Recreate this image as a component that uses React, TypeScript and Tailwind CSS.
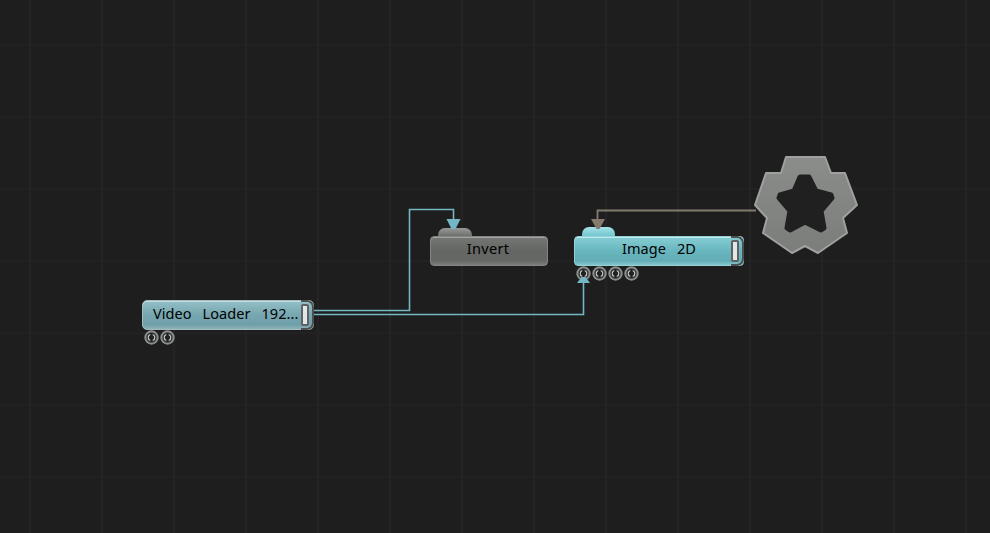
import React from 'react';

const font = { fontFamily: '"Noto Sans", sans-serif' };

// little round parameter dots below a node
function Dots({ count }: { count: number }) {
  return (
    <div className="flex gap-[1px] pl-[2px]">
      {Array.from({ length: count }).map((_, i) => (
        <svg key={i} width="15" height="15" viewBox="0 0 15 15">
          <circle cx="7.5" cy="7.5" r="6.2" fill="#3a3b3b" stroke="#8b8d8d" strokeWidth="2" />
          <circle cx="7.5" cy="7.5" r="4.2" fill="#202121" />
          <path d="M6.3 4.5A3.2 3.2 0 0 0 6.3 10.5M8.7 4.5A3.2 3.2 0 0 1 8.7 10.5" fill="none" stroke="#c9cbcb" strokeWidth="1.2" />
        </svg>
      ))}
    </div>
  );
}

function Output() {
  return (
    <div className="absolute right-[-1px] top-[-1px] bottom-[-1px] flex w-[13px] items-center rounded-r-[7px] border-[2px] border-l-0 border-[#4d5050]">
      <div className="h-[22px] w-[8px] rounded-[2px] border-[2px] border-[#5f6263] bg-[#e4e6e6]" />
    </div>
  );
}

export default function App() {
  return (
    <div className="relative h-[533px] w-[990px] overflow-hidden bg-[#1e1e1e] bg-[linear-gradient(90deg,#212121_2px,#262626_2px,#262626_3px,transparent_3px),linear-gradient(180deg,#222222_2px,transparent_2px)] bg-[size:72px_72px] bg-[position:28px_44px]" style={font}>
      {/* wires */}
      <svg className="absolute inset-0" width="990" height="533" viewBox="0 0 990 533" fill="none">
        <path d="M313 310.5H409.5V209.5H453.5V222" stroke="#74b6c4" strokeWidth="1.6" />
        <path d="M313 314.5H583.5V282" stroke="#74b6c4" strokeWidth="1.6" />
        <path d="M756 210.5H597.5V222" stroke="#857a6e" strokeWidth="1.8" />
      </svg>

      {/* Video Loader */}
      <div className="absolute left-[142px] top-[300px] w-[172px]">
        <div className="relative flex h-[30px] items-center rounded-[5px] border border-[#a3bcc1] bg-[linear-gradient(180deg,#94c0c7_0%,#76a6b0_50%,#6f9fa9_85%,#90b3b9_100%)] pb-[3px] pl-[10px] text-[14.5px] tracking-[0.05px] [word-spacing:1.7px] text-black shadow-[inset_0_1px_0_#c4dde1]">
          <span className="whitespace-pre">Video  Loader  192...</span>
          <Output />
        </div>
        <Dots count={2} />
      </div>

      {/* Invert */}
      <div className="absolute left-[430px] top-[228px] w-[118px]">
        <div className="ml-[8px] h-[8px] w-[34px] rounded-t-[7px] bg-[linear-gradient(180deg,#979a97,#6e706e)]" />
        <div className="flex h-[30px] items-center justify-center rounded-[4px] border border-[#828582] bg-[linear-gradient(180deg,#747774_0%,#646664_50%,#666866_85%,#7b7e7b_100%)] pb-[4px] pr-[2px] text-[14.5px] tracking-[0.3px] text-black shadow-[inset_0_1px_0_#a0a3a0]">
          Invert
        </div>
      </div>

      {/* Image 2D */}
      <div className="absolute left-[574px] top-[227px] w-[170px]">
        <div className="ml-[8px] h-[9px] w-[33px] rounded-t-[7px] bg-[linear-gradient(180deg,#a5e2e8,#73c6cf)]" />
        <div className="relative flex h-[30px] items-center justify-center rounded-[4px] border border-[#93d3d8] bg-[linear-gradient(180deg,#86cdd3_0%,#68b6bf_50%,#62acb5_85%,#86c6cc_100%)] pb-[4px] text-[14.5px] tracking-[0.05px] [word-spacing:1.7px] text-black shadow-[inset_0_1px_0_#bfeaee]">
          <span className="whitespace-pre">Image  2D</span>
          <Output />
        </div>
        <Dots count={4} />
      </div>

      {/* arrow heads */}
      <svg className="absolute inset-0" width="990" height="533" viewBox="0 0 990 533">
        <path d="M446.5 219H460.5L455.5 229H451.5Z" fill="#74b6c4" />
        <path d="M591 219H605L599.5 229H596.5Z" fill="#857a6e" />
        <path d="M577 283L581.5 277H585.5L590 283Z" fill="#74b6c4" />
      </svg>

      {/* star gear */}
      <svg className="absolute left-[745px] top-[145px] blur-[0.4px]" width="120" height="120" viewBox="0 0 120 120">
        <defs>
          <linearGradient id="gearFill" x1="0" y1="0" x2="0" y2="1">
            <stop offset="0" stopColor="#8a8d8a" />
            <stop offset="1" stopColor="#7a7d7a" />
          </linearGradient>
        </defs>
        <path
          d="M41 12H80L86 28H100L112 60L98 73L102 88L73 108L60 101L47 108L18 88L22 73L10 60L21 28H36Z"
          fill="url(#gearFill)"
          stroke="#9ea19e"
          strokeWidth="2"
          strokeLinejoin="round"
        />
        <path
          d="M55 32H64L71 46L86 50L87 53L76 66L79 83L76 85L60 77L45 85L42 83L45 66L34 53L35 50L49 46Z"
          fill="#1f201f"
          stroke="#1f201f"
          strokeWidth="5"
          strokeLinejoin="round"
        />
      </svg>
    </div>
  );
}
